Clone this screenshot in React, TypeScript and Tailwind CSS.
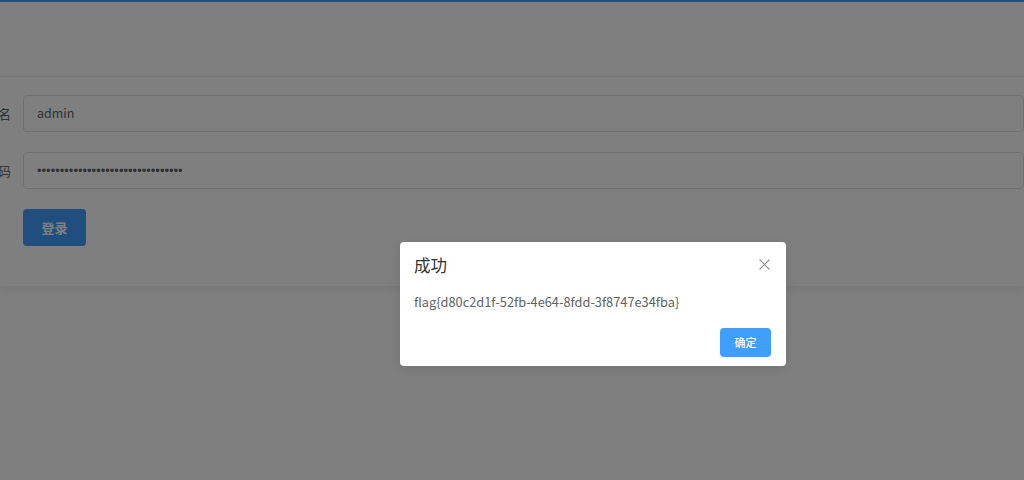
import React from "react";

export default function App() {
  return (
    <div className="relative h-[480px] w-[1024px] overflow-hidden bg-white font-['Noto_Sans_CJK_SC','Noto_Sans',sans-serif]">
      <div className="h-[2px] bg-[#409eff]" />
      <div className="pt-[74px]">
        <div className="border-y border-[#f0f0f0] bg-white pb-[40px] pt-[18px] shadow-[0_2px_8px_rgba(0,0,0,0.08)]">
          <div className="flex items-center">
            <div className="flex w-[11px] justify-end whitespace-nowrap text-[13px] text-[#606266]">用户名</div>
            <div className="ml-[12px] flex h-[37px] w-[1100px] items-center rounded-[4px] border border-[#dcdfe6] px-[13px] text-[12.5px] text-[#606266]">
              admin
            </div>
          </div>
          <div className="mt-[20px] flex items-center">
            <div className="flex w-[11px] justify-end whitespace-nowrap text-[13px] text-[#606266]">密码</div>
            <div className="ml-[12px] flex h-[37px] w-[1100px] items-center rounded-[4px] border border-[#dcdfe6] px-[13px] text-[#606266]">
              <input
                type="password"
                readOnly
                value="abcdefghijklmnopqrstuvwxyz012345"
                className="w-[600px] bg-transparent font-['Liberation_Sans',sans-serif] text-[13px] text-[#606266] outline-none"
              />
            </div>
          </div>
          <div className="mt-[20px] pl-[23px]">
            <button className="h-[37px] w-[63px] rounded-[4px] bg-[#409eff] text-[13px] font-bold text-white">登录</button>
          </div>
        </div>
      </div>

      <div className="absolute inset-0 bg-black/50" />

      <div className="absolute left-[400px] top-[242px] h-[124px] w-[386px] rounded-[4px] bg-white shadow-[0_2px_12px_rgba(0,0,0,0.1)]">
        <div className="flex items-start justify-between px-[14px] pt-[11px]">
          <div className="text-[16.5px] leading-[24px] text-[#303133]">成功</div>
          <svg className="mr-[2px] mt-[6px]" width="11" height="11" viewBox="0 0 11 11" fill="none" stroke="#909399" strokeWidth="1.2">
            <path d="M0.5 0.5 L10.5 10.5 M10.5 0.5 L0.5 10.5" />
          </svg>
        </div>
        <div className="mt-[13px] px-[14px] text-[12.8px] leading-[24px] text-[#606266]">
          flag{"{"}d80c2d1f-52fb-4e64-8fdd-3f8747e34fba{"}"}
        </div>
        <div className="mt-[14px] flex justify-end pr-[15px]">
          <button className="h-[29px] w-[51px] rounded-[4px] bg-[#409eff] text-[11px] font-medium text-white">确定</button>
        </div>
      </div>
    </div>
  );
}
